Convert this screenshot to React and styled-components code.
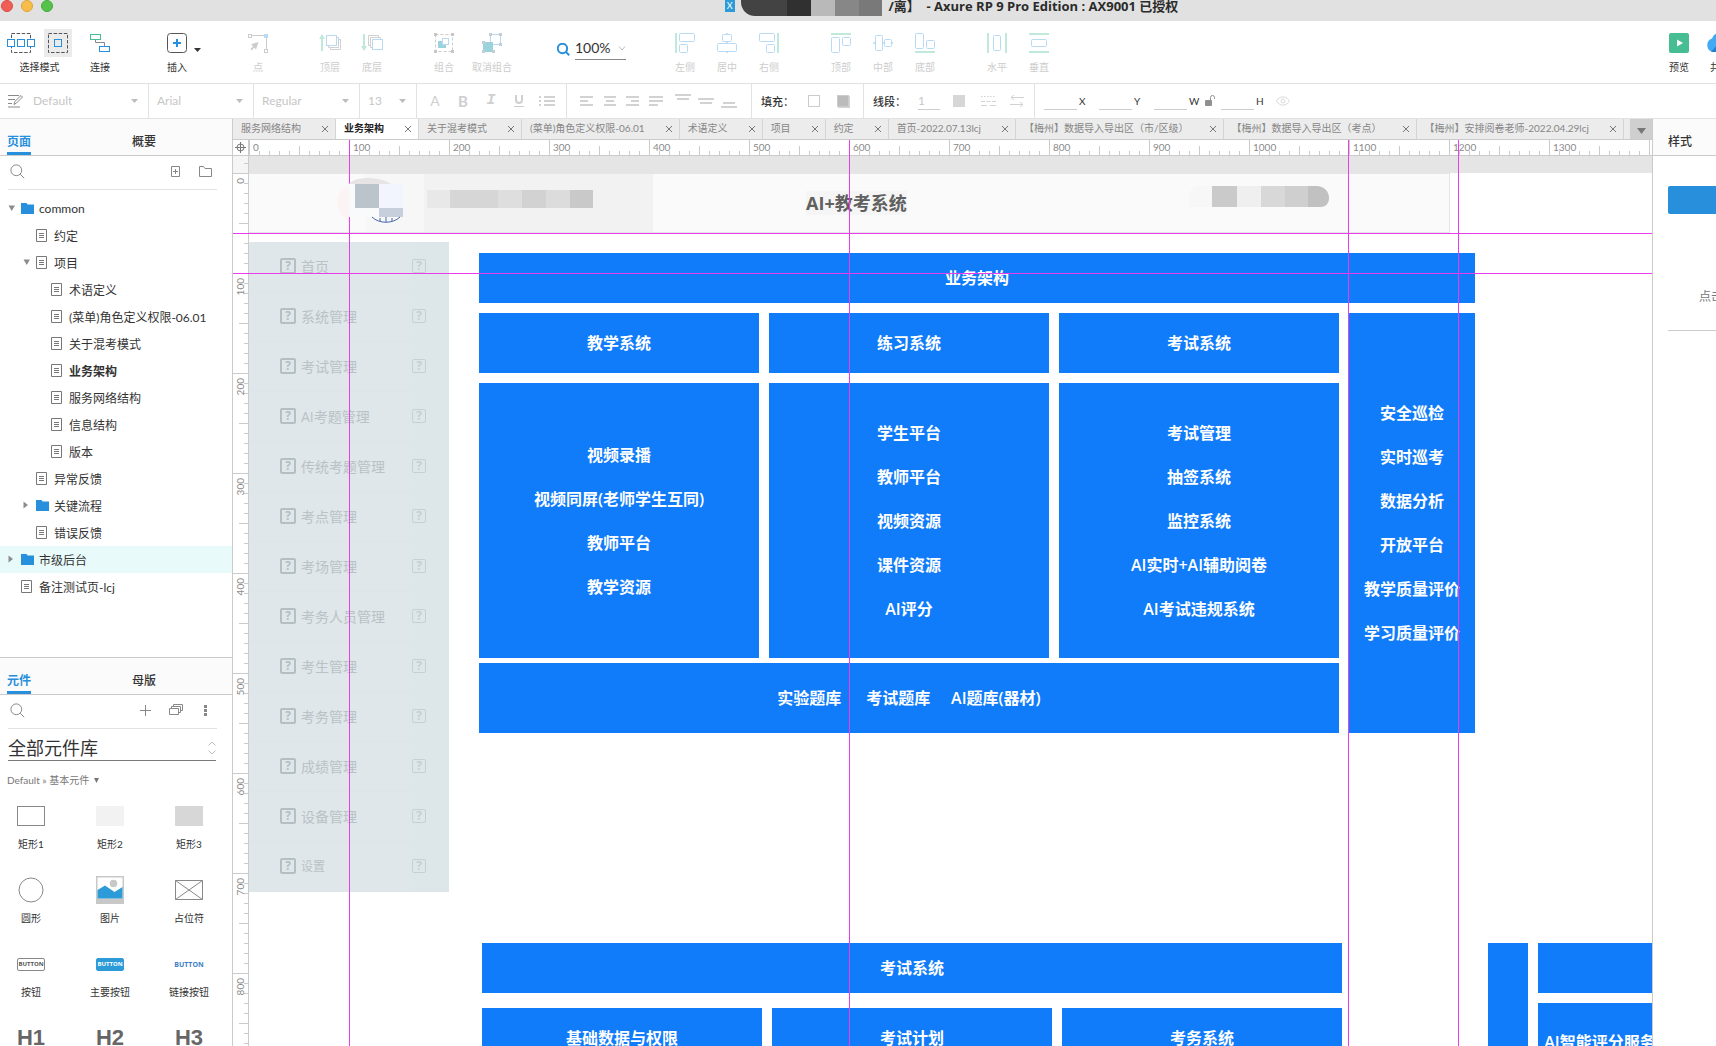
import React, { useState } from "react";
import styled, { createGlobalStyle, css } from "styled-components";

const uiFont = `Lato, "Noto Sans CJK SC", sans-serif`;
const canvasFont = `"Open Sans", "Noto Sans CJK SC", sans-serif`;

const blue = "#288fdc";
const line = "#cbcbcb";
const softLine = "#e2e2e2";
const guide = "#ea3bec";
const paleBlue = "#b9daf5";
const paleGreen = "#bfe9da";

const GlobalStyle = createGlobalStyle`
  * {
    box-sizing: border-box;
  }

  body {
    margin: 0;
    background: #fff;
    color: #333;
    font-family: ${uiFont};
    font-size: 12px;
  }

  button, input, select {
    margin: 0;
    padding: 0;
    border: none;
    border-radius: 0;
    background: none;
    color: inherit;
    font: inherit;
    outline: none;
  }

  select {
    appearance: none;
  }

  svg {
    display: block;
    flex: none;
  }
`;

const Window = styled.div`
  display: flex;
  flex-direction: column;
  height: 100vh;
  overflow: hidden;
`;

/* ---------- title bar ---------- */

const TitleBar = styled.header`
  flex: none;
  display: grid;
  grid-template-columns: 1fr auto 1fr;
  height: 21px;
  background: #e1e1e1;
`;

const Lights = styled.div`
  display: flex;
  gap: 8px;
  padding-left: 1px;
`;

const Light = styled.button`
  width: 12px;
  height: 12px;
  border-radius: 50%;
  background: ${(p) => p.$color};
  border: 1px solid ${(p) => p.$edge};
`;

const Title = styled.div`
  display: flex;
  align-items: flex-start;
  height: 17px;
  padding-left: 187px;
  font: bold 13px/12px "Open Sans", "Noto Sans CJK SC", sans-serif;
  color: #2b2b2b;
  white-space: pre;
`;

const FileBadge = styled.span`
  width: 10px;
  height: 12px;
  margin-right: 6px;
  background: #2d9bd8;
  color: #fff;
  font: 9px/11px ${uiFont};
  text-align: center;
`;

const Mosaic = styled.span`
  display: flex;
  height: ${(p) => p.$height}px;
  overflow: hidden;
  border-radius: ${(p) => p.$radius || "0"};
`;

const Tile = styled.span`
  width: ${(p) => p.$width}px;
  background: ${(p) => p.$color};
`;

/* ---------- main toolbar ---------- */

const Toolbar = styled.div`
  flex: none;
  display: flex;
  height: 63px;
  border-bottom: 1px solid ${softLine};
`;

const ToolGroups = styled.div`
  flex: 1;
  min-width: 0;
  display: flex;
  gap: 30px;
  padding: 8px 0 0 7px;
  overflow: hidden;
`;

const ToolGroup = styled.div`
  flex: none;
  display: flex;
  gap: ${(p) => p.$gap || 0}px;
  padding: ${(p) => p.$padding || "0"};
`;

const Tool = styled.button`
  flex: none;
  display: flex;
  flex-direction: column;
  align-items: center;
  gap: 4px;
  width: ${(p) => p.$width || 42}px;
  height: 44px;
  color: ${(p) => (p.disabled ? "#cdcdcd" : "#333")};
  font-size: 10px;
  line-height: 12px;
  white-space: nowrap;
`;

const ToolIcon = styled.span`
  display: flex;
  align-items: center;
  justify-content: center;
  height: 28px;
`;

const ModeIcons = styled(ToolIcon)`
  gap: 8px;
`;

const ModeOn = styled.span`
  display: flex;
  align-items: center;
  justify-content: center;
  width: 28px;
  height: 28px;
  background: #ebebeb;
`;

const CaretButton = styled.button`
  display: flex;
  align-items: center;
  width: 8px;
  height: 42px;
`;

const ZoomGroup = styled.div`
  display: flex;
  align-items: center;
  gap: 5px;
  height: 40px;
  padding: 0 8px;
`;

const ZoomBox = styled.div`
  display: flex;
  align-items: center;
  width: 51px;
  height: 21px;
  border-bottom: 1px solid #888;

  select {
    flex: 1;
    min-width: 0;
    font-size: 14px;
    line-height: 18px;
    padding-bottom: 2px;
  }
`;

const ShareTools = styled.div`
  flex: none;
  display: flex;
  gap: 7px;
  width: 64px;
  padding: 8px 0 0 10px;
  overflow: hidden;
`;

/* ---------- format bar ---------- */

const FormatBar = styled.div`
  flex: none;
  display: flex;
  height: 35px;
  border-bottom: 1px solid ${softLine};
  overflow: hidden;
`;

const Segment = styled.div`
  flex: none;
  display: flex;
  align-items: center;
  gap: ${(p) => p.$gap || 0}px;
  width: ${(p) => p.$width}px;
  padding: 0 10px 0 8px;
  border-right: 1px solid ${softLine};
  color: #c6c6c6;

  select {
    flex: 1;
    min-width: 0;
    line-height: 20px;
  }
`;

const ButtonSegment = styled(Segment)`
  padding: 0 0 0 ${(p) => p.$left}px;
`;

const Fields = styled.div`
  display: flex;
  align-items: center;
  gap: 10px;
  padding-left: 9px;
`;

const FormatButton = styled.button`
  display: flex;
  align-items: center;
  justify-content: center;
  width: ${(p) => p.$width}px;
  height: 24px;
  color: #cfcfcf;
  font: ${(p) => p.$font || "inherit"};
`;

const Spacer = styled.span`
  width: 4px;
`;

const FormatLabel = styled.span`
  width: 36px;
  color: #333;
  font-size: 11px;
  font-weight: 500;
  white-space: nowrap;
`;

const Swatch = styled.button`
  flex: none;
  width: 12px;
  height: 12px;
  border: 1px solid ${(p) => p.$edge};
  background: ${(p) => p.$fill};
`;

const ShadowSwatch = styled(Swatch)`
  box-shadow: 1px 1px 0 #d4d4d4;
`;

const LineInput = styled.input`
  width: ${(p) => p.$width}px;
  height: 18px;
  border-bottom: 1px solid #cdcdcd;
  color: #c6c6c6;
`;

const Field = styled.label`
  display: flex;
  align-items: center;
  gap: 2px;
  width: 45px;
  font-size: 10px;
`;

const LockButton = styled.button`
  margin: 0 -4px;
`;

/* ---------- side panels ---------- */

const Main = styled.div`
  flex: 1;
  min-height: 0;
  display: flex;
`;

const LeftPanel = styled.aside`
  flex: none;
  display: flex;
  flex-direction: column;
  width: 233px;
  border-right: 1px solid ${line};
`;

const PagesPane = styled.section`
  flex: 539 1 0;
  min-height: 0;
  overflow: hidden;
`;

const WidgetsPane = styled.section`
  flex: 388 1 0;
  min-height: 0;
  overflow: hidden;
  border-top: 1px solid ${line};
`;

const PaneTabs = styled.div`
  display: grid;
  grid-template-columns: 125px auto;
  justify-items: start;
  align-items: end;
  height: 37px;
  padding-left: ${(p) => p.$left || 7}px;
  background: #fbfbfb;
  border-bottom: 1px solid ${line};
`;

const PaneTab = styled.button`
  font-size: 12px;
  font-weight: ${(p) => (p.$active ? "bold" : 500)};
  line-height: 20px;
  color: ${(p) => (p.$active ? blue : "#333")};
  border-bottom: 3px solid ${(p) => (p.$active ? blue : "transparent")};
`;

const PaneActions = styled.div`
  display: flex;
  align-items: center;
  justify-content: space-between;
  height: 34px;
  margin: 0 15px 0 8px;
  padding: 0 0 3px 2px;
  border-bottom: 1px solid ${softLine};
`;

const ActionGroup = styled.div`
  display: flex;
  margin-right: -4px;
`;

const ActionButton = styled.button`
  display: flex;
  align-items: center;
  justify-content: center;
  width: ${(p) => p.$width || 30}px;
  height: 24px;
`;

const Tree = styled.ul`
  margin: 0;
  padding: 5px 0 0;
  list-style: none;
`;

const TreeRow = styled.li`
  display: flex;
  align-items: center;
  height: 27px;
  padding: 0 0 1px ${(p) => 8 + p.$level * 15}px;
  background: ${(p) => (p.$marked ? "#e9fafa" : "none")};
  font-weight: ${(p) => (p.$current ? "bold" : "normal")};
  white-space: nowrap;
`;

const ArrowSlot = styled.span`
  width: 13px;
`;

const IconSlot = styled.span`
  width: 18px;
`;

const LibraryBox = styled.div`
  display: flex;
  align-items: center;
  height: 32px;
  margin: 0 16px 0 8px;
  padding-top: 7px;
  border-bottom: 1px solid #7a7a7a;

  select {
    flex: 1;
    min-width: 0;
    font-size: 18px;
    line-height: 24px;
  }
`;

const Crumb = styled.button`
  display: flex;
  align-items: center;
  gap: 5px;
  margin: 12px 0 0 7px;
  font-size: 10px;
  line-height: 14px;
  color: #777;
`;

const WidgetGrid = styled.div`
  display: grid;
  grid-template-columns: repeat(3, 44px);
  grid-auto-rows: 74px;
  column-gap: 35px;
  margin: 15px 0 0 9px;
`;

const Widget = styled.div`
  display: flex;
  flex-direction: column;
  align-items: center;
  gap: 7px;
  font-size: 10px;
  line-height: 14px;
  white-space: nowrap;
`;

const WidgetArt = styled.div`
  display: flex;
  align-items: center;
  justify-content: center;
  height: 28px;
`;

const Box = styled.span`
  width: 28px;
  height: 20px;
  border: 1px solid ${(p) => p.$edge};
  background: ${(p) => p.$fill};
`;

const MiniButton = styled.span`
  width: 28px;
  height: 13px;
  border: 1px solid ${(p) => p.$edge};
  border-radius: 2px;
  background: ${(p) => p.$fill};
  color: ${(p) => p.$color};
  font: bold 6px/11px "Open Sans", sans-serif;
  text-align: center;
`;

const MiniLink = styled.span`
  color: #3d7fc4;
  font: bold 7px/11px "Open Sans", sans-serif;
`;

const HeadingArt = styled.span`
  color: #666;
  font: bold 22px/24px "Liberation Sans", Arial, sans-serif;
`;

const RightPanel = styled.aside`
  flex: none;
  width: 64px;
  border-left: 1px solid ${line};
  overflow: hidden;
`;

const StyleBody = styled.div`
  width: 230px;
  padding: 30px 15px 0;
`;

const StyleButton = styled.button`
  display: block;
  width: 200px;
  height: 28px;
  border-radius: 2px;
  background: ${blue};
`;

const StyleHint = styled.p`
  margin: 0;
  padding: 73px 0 23px 31px;
  border-bottom: 1px solid ${line};
  color: #777;
  line-height: 20px;
  white-space: nowrap;
`;

/* ---------- workspace ---------- */

const Workspace = styled.main`
  flex: 1;
  min-width: 0;
  display: flex;
  flex-direction: column;
`;

const TabStrip = styled.div`
  flex: none;
  display: flex;
  height: 21px;
  background: #ececec;
  border-bottom: 1px solid ${line};
`;

const Tabs = styled.div`
  flex: 1;
  min-width: 0;
  display: flex;
  overflow: hidden;
`;

const Tab = styled.div`
  flex: none;
  display: flex;
  align-items: center;
  gap: 20px;
  padding: 0 6px 0 8px;
  border-right: 1px solid #d5d5d5;
  background: ${(p) => (p.$active ? "#fff" : "#ececec")};
  font-size: 10px;
`;

const TabName = styled.button`
  line-height: 18px;
  padding-bottom: 2px;
  color: ${(p) => (p.$active ? "#222" : "#868686")};
  font-weight: ${(p) => (p.$active ? "bold" : "normal")};
  white-space: nowrap;
`;

const TabMore = styled.button`
  flex: none;
  display: flex;
  align-items: center;
  justify-content: center;
  width: 22px;
  padding-top: 4px;
  background: #cfcfcf;
`;

const Stage = styled.div`
  flex: 1;
  min-height: 0;
  display: flex;
  flex-direction: column;
  position: relative;
  overflow: hidden;
  isolation: isolate;
`;

const RulerRow = styled.div`
  flex: none;
  display: flex;
  height: 16px;
  border-bottom: 1px solid ${line};
`;

const Corner = styled.div`
  flex: none;
  display: flex;
  align-items: center;
  justify-content: center;
  width: 16px;
  border-right: 1px solid ${line};
`;

const HRuler = styled.div`
  flex: 1;
  min-width: 0;
  display: flex;
  overflow: hidden;
`;

const rulerText = css`
  color: #8a8a8a;
  font-size: 10px;
`;

const HCell = styled.div`
  flex: none;
  width: 100px;
  padding-left: 3px;
  border-left: 1px solid ${line};
  line-height: 15px;
  background:
    linear-gradient(${line}, ${line}) 49px 100% / 1px 9px no-repeat,
    repeating-linear-gradient(90deg, transparent 0 9px, ${line} 9px 10px) 0 100% / 100% 4px no-repeat;
  ${rulerText}
`;

const StageBody = styled.div`
  flex: 1;
  min-height: 0;
  display: flex;
`;

const VRuler = styled.div`
  flex: none;
  width: 16px;
  border-right: 1px solid ${line};
  overflow: hidden;
`;

const VLead = styled.div`
  height: 17px;
  background:
    linear-gradient(${line}, ${line}) 100% 7px / 4px 1px no-repeat,
    #f5f5f5;
`;

const VCell = styled.div`
  height: 100px;
  padding-top: 4px;
  border-top: 1px solid ${line};
  background:
    linear-gradient(${line}, ${line}) 100% 49px / 9px 1px no-repeat,
    repeating-linear-gradient(180deg, transparent 0 9px, ${line} 9px 10px) 100% 0 / 4px 100% no-repeat;
  ${rulerText}

  span {
    display: block;
    writing-mode: vertical-rl;
    transform: rotate(180deg);
    line-height: 15px;
  }
`;

const Canvas = styled.div`
  flex: 1;
  min-width: 0;
  padding-top: 17px;
  background: #e5e5e5;
  overflow: hidden;
`;

const Page = styled.div`
  position: relative;
  height: 100%;
  background: #fff;
  font-family: ${canvasFont};
`;

const Guide = styled.div`
  position: absolute;
  z-index: 1;
  background: ${guide};
  ${(p) =>
    p.$vertical
      ? `left: ${p.$at}px; top: 0; bottom: 0; width: 1px;`
      : `top: ${p.$at}px; left: 0; right: 0; height: 1px;`}
`;

const Placed = styled.div`
  position: absolute;
  left: ${(p) => p.$x}px;
  top: ${(p) => p.$y}px;
  width: ${(p) => (p.$w ? `${p.$w}px` : "auto")};
  height: ${(p) => (p.$h ? `${p.$h}px` : "auto")};
`;

const Node = styled(Placed)`
  display: flex;
  flex-direction: column;
  align-items: center;
  justify-content: center;
  background: #107cfa;
  color: #fff;
  font-size: 16px;
  font-weight: 600;
  line-height: 44px;
  white-space: pre;
`;

const Banner = styled(Placed)`
  background: #fafafa;
  border: 1px solid #e6e6e6;
  border-left: none;
`;

const BannerShade = styled(Placed)`
  background: linear-gradient(90deg, #f7f7f7 58px, #f2f2f2 58px);
`;

const BannerTitle = styled(Placed)`
  background: #f5f5f5;
  color: #606060;
  font-size: 18px;
  font-weight: bold;
  line-height: 24px;
  white-space: nowrap;
`;

const Emblem = styled(Placed)`
  z-index: 2;
`;

const Menu = styled(Placed)`
  background: linear-gradient(90deg, #dfe7ea 160px, #dde7e9 160px);
`;

const MenuRow = styled.div`
  display: flex;
  align-items: center;
  height: 50px;
  padding: 0 23px 1px 31px;
  border-bottom: 1px solid #dce5e8;
  color: #b9c2c5;
  font-size: ${(p) => (p.$small ? 12 : 14)}px;

  span {
    flex: 1;
    padding-left: 5px;
  }
`;

const Unknown = styled.i`
  flex: none;
  width: ${(p) => p.$size}px;
  height: ${(p) => p.$size}px;
  border: ${(p) => (p.$faint ? 1 : 2)}px solid ${(p) => (p.$faint ? "#c5d0d2" : "#b5bec1")};
  border-radius: 2px;
  color: ${(p) => (p.$faint ? "#c5d0d2" : "#b5bec1")};
  font: bold 12px/12px "Open Sans", sans-serif;
  text-align: center;
`;

/* ---------- drawings ---------- */

const Svg = ({ w, h, children, ...rest }) => (
  <svg width={w} height={h} viewBox={`0 0 ${w} ${h}`} fill="none" aria-hidden="true" {...rest}>
    {children}
  </svg>
);

const Caret = ({ color = "#bdbdbd" }) => (
  <Svg w={7} h={4}><path d="M0 0h7L3.5 4z" fill={color} /></Svg>
);

const SearchIcon = ({ size = 15, color = "#888", width = 1 }) => (
  <Svg w={size} h={size} stroke={color} strokeWidth={width}>
    <circle cx={size * 0.42} cy={size * 0.42} r={size * 0.36} />
    <path d={`M${size * 0.68} ${size * 0.68}L${size - 0.8} ${size - 0.8}`} />
  </Svg>
);

const Arrow = ({ open }) => (
  <Svg w={8} h={8}>
    <path d={open ? "M0.5 1.5h6.5L3.75 7z" : "M0.5 0.5v7L5 4z"} fill="#8c8c8c" />
  </Svg>
);

const PageIcon = () => (
  <Svg w={11} h={13} stroke="#777">
    <path d="M.5.5h10v12H.5zM3 4.5h5M3 6.5h5M3 8.5h5" />
  </Svg>
);

const FolderIcon = () => (
  <Svg w={13} h={11}><path d="M0 0h5.5l1 1.5H13V11H0z" fill={blue} /></Svg>
);

const MultiSelectIcon = () => (
  <Svg w={29} h={20}>
    <rect x="4.5" y=".5" width="19" height="19" stroke="#555" strokeDasharray="3.5 1.6" />
    <g stroke={blue} fill="#fff">
      <rect x=".5" y="6.5" width="7" height="7" />
      <rect x="10.5" y="6.5" width="7" height="7" />
      <rect x="20.5" y="6.5" width="7" height="7" />
    </g>
  </Svg>
);

const SingleSelectIcon = () => (
  <Svg w={20} h={20}>
    <rect x=".5" y=".5" width="19" height="19" stroke="#555" strokeDasharray="3.5 1.6" />
    <rect x="6.5" y="6.5" width="7" height="7" stroke={blue} />
  </Svg>
);

const ConnectIcon = () => (
  <Svg w={20} h={20}>
    <path d="M5.5 7v2.5h9V13" stroke="#888" />
    <rect x=".5" y="1.5" width="10" height="5" stroke="#47bd94" />
    <rect x="9.5" y="13.5" width="10" height="5" stroke={blue} />
  </Svg>
);

const InsertIcon = () => (
  <Svg w={20} h={20}>
    <rect x=".5" y=".5" width="19" height="19" rx="3" stroke="#555" />
    <path d="M10 6v8M6 10h8" stroke={blue} strokeWidth="2" />
  </Svg>
);

const PointIcon = () => (
  <Svg w={20} h={20} stroke="#ccc">
    <path d="M4 2.5h12M18.5 5v12" />
    <rect x=".5" y="1.5" width="3" height="3" />
    <rect x="16.5" y="16.5" width="3" height="3" />
    <rect x="16" y="1" width="4" height="4" fill={paleBlue} stroke="none" />
    <path d="M10.500 9l-2.500 7.500-2-2L4 17.500 2.500 16l2.600-2.800-2-2z" fill="#ccc" stroke="none" />
  </Svg>
);

const FrontIcon = () => (
  <Svg w={22} h={20}>
    <path d="M3 18V4" stroke={paleGreen} strokeWidth="2" />
    <path d="M0 6l3-5 3 5z" fill={paleGreen} />
    <path d="M11.5 14.5v2h10v-10h-2M9.5 12.5v2h10v-10h-2" stroke="#d0d0d0" />
    <rect x="7.5" y="2.5" width="10" height="10" stroke={paleBlue} fill="#fff" />
  </Svg>
);

const BackIcon = () => (
  <Svg w={22} h={20}>
    <path d="M3 1v14" stroke={paleGreen} strokeWidth="2" />
    <path d="M0 13l3 5 3-5z" fill={paleGreen} />
    <path d="M9 12.5H7.5v-10h10V4M11 14.5H9.5v-10h10V6" stroke="#d0d0d0" />
    <rect x="11.5" y="6.5" width="10" height="10" stroke={paleBlue} fill="#fff" />
  </Svg>
);

const GroupIcon = () => (
  <Svg w={20} h={20}>
    <rect x="1.5" y="1.5" width="17" height="17" stroke="#ccc" strokeDasharray="3 2" />
    <path d="M0 0h3v3H0zM17 0h3v3h-3zM0 17h3v3H0zM17 17h3v3h-3z" fill="#c6c6c6" />
    <path d="M4 8h8v7H4z" fill="#9bd3dc" />
    <rect x="8.5" y="5.5" width="6" height="6" stroke={paleBlue} fill="#fff" />
  </Svg>
);

const UngroupIcon = () => (
  <Svg w={20} h={20}>
    <rect x="8.5" y="1.5" width="10" height="10" stroke={paleBlue} />
    <path d="M1 9h10v10H1z" fill="#9bd3dc" />
    <path d="M7 0h3v3H7zM17 0h3v3h-3zM17 10h3v3h-3zM0 8h3v3H0zM0 17h3v3H0zM10 17h3v3h-3z" fill="#c4cdd2" />
  </Svg>
);

// bar: the green edge, boxes: [x, y, width, height] of the two aligned shapes
const AlignIcon = ({ bar, boxes }) => (
  <Svg w={20} h={20}>
    <path d={bar} stroke={paleGreen} strokeWidth="2" />
    {boxes.map(([x, y, w, h]) => (
      <rect key={`${x}-${y}`} x={x} y={y} width={w} height={h} rx="1" stroke={paleBlue} fill="#fff" />
    ))}
  </Svg>
);

const PreviewIcon = () => (
  <Svg w={20} h={20}>
    <rect width="20" height="20" rx="2" fill="#47bd94" />
    <path d="M8 6.5l6 3.5-6 3.5z" fill="#fff" />
  </Svg>
);

const CloudIcon = () => (
  <Svg w={28} h={20}>
    <path d="M7 19a7 7 0 0 1-1-13.5A8 8 0 0 1 21 5a7 7 0 0 1 0 14z" fill="#42aaf5" />
    <path d="M5 19l7-8 12 8z" fill="#1e7fd0" />
  </Svg>
);

const StyleIcon = () => (
  <Svg w={15} h={14} stroke="#8a8a8a">
    <path d="M0 1.5h11M0 5.5h7M0 9.5h4M0 13h12M6 10.5l.8-3L13 1.5l1.5 1.5-6 6z" />
  </Svg>
);

const Lines = ({ w = 14, h = 11, rows }) => (
  <Svg w={w} h={h}>
    {rows.map(([x, y, width]) => (
      <rect key={`${x}-${y}`} x={x} y={y} width={width} height="2" fill="#d2d2d2" />
    ))}
  </Svg>
);

const ChevronDown = () => (
  <Svg w={8} h={5} stroke="#bbb"><path d="M1 .5l3 3.5 3-3.5" /></Svg>
);

const UpDown = () => (
  <Svg w={8} h={14} stroke="#bbb"><path d="M.5 4.5L4 1l3.5 3.5M.5 9.5L4 13l3.5-3.5" /></Svg>
);

const CloseIcon = () => (
  <Svg w={8} h={8} stroke="#777"><path d="M1 1l6 6M7 1L1 7" /></Svg>
);

/* ---------- data ---------- */

const alignTools = [
  [
    ["左侧", "M1 0v20", [[4.5, .5, 15, 8], [4.5, 11.5, 8, 8]]],
    ["居中", "M10 0v20", [[5.5, 1.5, 9, 7], [.5, 10.5, 19, 8]]],
    ["右侧", "M19 0v20", [[.5, .5, 15, 8], [7.5, 11.5, 8, 8]]],
  ],
  [
    ["顶部", "M0 1h20", [[.5, 4.5, 8, 15], [11.5, 4.5, 8, 8]]],
    ["中部", "M0 10h20", [[2.5, 2.5, 7, 15], [11.5, 6.5, 7, 7]]],
    ["底部", "M0 19h20", [[.5, .5, 8, 15], [11.5, 7.5, 8, 8]]],
  ],
  [
    ["水平", "M1 0v20M19 0v20", [[6.5, 2.5, 7, 15]]],
    ["垂直", "M0 1h20M0 19h20", [[2.5, 6.5, 15, 7]]],
  ],
];

const textAligns = [
  [[0, 0, 13], [0, 4, 8], [0, 8, 13]],
  [[1, 0, 12], [3, 4, 8], [1, 8, 12]],
  [[0, 0, 13], [5, 4, 8], [0, 8, 13]],
  [[0, 0, 14], [0, 4, 14], [0, 8, 9]],
];

const vertAligns = [
  [[0, 0, 16], [2, 4, 12]],
  [[0, 4, 16], [2, 8, 12]],
  [[2, 8, 12], [0, 12, 16]],
];

const tree = [
  { name: "common", level: 0, folder: true, arrow: "open" },
  { name: "约定", level: 1 },
  { name: "项目", level: 1, arrow: "open" },
  { name: "术语定义", level: 2 },
  { name: "(菜单)角色定义权限-06.01", level: 2 },
  { name: "关于混考模式", level: 2 },
  { name: "业务架构", level: 2 },
  { name: "服务网络结构", level: 2 },
  { name: "信息结构", level: 2 },
  { name: "版本", level: 2 },
  { name: "异常反馈", level: 1 },
  { name: "关键流程", level: 1, folder: true, arrow: "closed" },
  { name: "错误反馈", level: 1 },
  { name: "市级后台", level: 0, folder: true, arrow: "closed", marked: true },
  { name: "备注测试页-lcj", level: 0 },
];

const tabs = [
  "服务网络结构",
  "业务架构",
  "关于混考模式",
  "(菜单)角色定义权限-06.01",
  "术语定义",
  "项目",
  "约定",
  "首页-2022.07.13lcj",
  "【梅州】数据导入导出区（市/区级）",
  "【梅州】数据导入导出区（考点）",
  "【梅州】安排阅卷老师-2022.04.29lcj",
];

const menu = [
  "首页", "系统管理", "考试管理", "AI考题管理", "传统考题管理", "考点管理", "考场管理",
  "考务人员管理", "考生管理", "考务管理", "成绩管理", "设备管理", "设置",
];

const nodes = [
  [230, 80, 996, 50, ["业务架构"]],
  [230, 140, 280, 60, ["教学系统"]],
  [520, 140, 280, 60, ["练习系统"]],
  [810, 140, 280, 60, ["考试系统"]],
  [1100, 140, 126, 420, ["安全巡检", "实时巡考", "数据分析", "开放平台", "教学质量评价", "学习质量评价"]],
  [230, 210, 280, 275, ["视频录播", "视频同屏(老师学生互同)", "教师平台", "教学资源"]],
  [520, 210, 280, 275, ["学生平台", "教师平台", "视频资源", "课件资源", "AI评分"]],
  [810, 210, 280, 275, ["考试管理", "抽签系统", "监控系统", "AI实时+AI辅助阅卷", "AI考试违规系统"]],
  [230, 490, 860, 70, ["实验题库      考试题库     AI题库(器材)"]],
  [233, 770, 860, 50, ["考试系统"]],
  [233, 835, 280, 60, ["基础数据与权限"]],
  [523, 835, 280, 60, ["考试计划"]],
  [813, 835, 280, 60, ["考务系统"]],
  [1239, 770, 40, 300, []],
  [1289, 770, 124, 50, []],
  [1289, 830, 124, 78, ["AI智能评分服务"]],
];

const titleTiles = [[46, "#434343"], [24, "#303030"], [24, "#b9b9b9"], [24, "#878787"], [23, "#797979"]];
const nameTiles = [[23, "#e8e8e8"], [48, "#d6d6d6"], [24, "#dedede"], [24, "#d2d2d2"], [24, "#dcdcdc"], [23, "#c9c9c9"]];
const userTiles = [[23, "#f7f7f7"], [25, "#cacaca"], [24, "#efefef"], [24, "#d8d8d8"], [23, "#cfcfcf"], [21, "#c1c1c1"]];

const Tiles = ({ tiles, height, radius }) => (
  <Mosaic $height={height} $radius={radius}>
    {tiles.map(([width, color], i) => (
      <Tile key={i} $width={width} $color={color} />
    ))}
  </Mosaic>
);

/* ---------- sections ---------- */

const MainToolbar = () => (
  <Toolbar>
    <ToolGroups>
      <ToolGroup $gap={7}>
        <Tool $width={65}>
          <ModeIcons>
            <MultiSelectIcon />
            <ModeOn><SingleSelectIcon /></ModeOn>
          </ModeIcons>
          选择模式
        </Tool>
        <Tool><ToolIcon><ConnectIcon /></ToolIcon>连接</Tool>
      </ToolGroup>
      <ToolGroup $padding="0 5px 0 9px">
        <Tool $width={34}><ToolIcon><InsertIcon /></ToolIcon>插入</Tool>
        <CaretButton aria-label="更多插入"><Caret color="#333" /></CaretButton>
      </ToolGroup>
      <ToolGroup>
        <Tool disabled><ToolIcon><PointIcon /></ToolIcon>点</Tool>
      </ToolGroup>
      <ToolGroup>
        <Tool disabled><ToolIcon><FrontIcon /></ToolIcon>顶层</Tool>
        <Tool disabled><ToolIcon><BackIcon /></ToolIcon>底层</Tool>
      </ToolGroup>
      <ToolGroup>
        <Tool disabled><ToolIcon><GroupIcon /></ToolIcon>组合</Tool>
        <Tool disabled $width={54}><ToolIcon><UngroupIcon /></ToolIcon>取消组合</Tool>
      </ToolGroup>
      <ZoomGroup>
        <SearchIcon size={13} color={blue} width={2} />
        <ZoomBox>
          <select aria-label="缩放" defaultValue="100%"><option>100%</option></select>
          <ChevronDown />
        </ZoomBox>
      </ZoomGroup>
      {alignTools.map((group, i) => (
        <ToolGroup key={i}>
          {group.map(([name, bar, boxes]) => (
            <Tool key={name} disabled>
              <ToolIcon><AlignIcon bar={bar} boxes={boxes} /></ToolIcon>
              {name}
            </Tool>
          ))}
        </ToolGroup>
      ))}
    </ToolGroups>
    <ShareTools>
      <Tool $width={34}><ToolIcon><PreviewIcon /></ToolIcon>预览</Tool>
      <Tool $width={34}><ToolIcon><CloudIcon /></ToolIcon>共享</Tool>
    </ShareTools>
  </Toolbar>
);

const FormatToolbar = () => (
  <FormatBar>
    <Segment $width={149} $gap={10}>
      <StyleIcon />
      <select aria-label="样式" defaultValue="Default"><option>Default</option></select>
      <Caret />
    </Segment>
    <Segment $width={105}>
      <select aria-label="字体" defaultValue="Arial"><option>Arial</option></select>
      <Caret />
    </Segment>
    <Segment $width={106}>
      <select aria-label="字重" defaultValue="Regular"><option>Regular</option></select>
      <Caret />
    </Segment>
    <Segment $width={57}>
      <select aria-label="字号" defaultValue="13"><option>13</option></select>
      <Caret />
    </Segment>
    <ButtonSegment $width={150} $left={4}>
      <FormatButton $width={28} $font={`14px/20px ${uiFont}`}>A</FormatButton>
      <FormatButton $width={28} $font={`bold 15px/20px ${uiFont}`}>B</FormatButton>
      <FormatButton $width={28} $font={`italic bold 15px/20px "Liberation Mono", monospace`}>I</FormatButton>
      <FormatButton $width={28} aria-label="下划线">
        <Svg w={10} h={12} stroke="#cfcfcf" strokeWidth="2">
          <path d="M2 0v5a3 3 0 0 0 6 0V0" />
          <path d="M0 11.5h10" strokeWidth="1" />
        </Svg>
      </FormatButton>
      <FormatButton $width={28} aria-label="项目符号">
        <Lines w={16} rows={[[0, 0, 2], [5, 0, 11], [0, 4, 2], [5, 4, 11], [0, 8, 2], [5, 8, 11]]} />
      </FormatButton>
    </ButtonSegment>
    <ButtonSegment $width={185} $left={8}>
      {textAligns.map((rows, i) => (
        <FormatButton key={i} $width={23} aria-label="文本对齐"><Lines rows={rows} /></FormatButton>
      ))}
      <Spacer />
      {vertAligns.map((rows, i) => (
        <FormatButton key={i} $width={23} aria-label="垂直对齐"><Lines w={16} h={14} rows={rows} /></FormatButton>
      ))}
    </ButtonSegment>
    <ButtonSegment $width={112} $left={9} $gap={5}>
      <FormatLabel>填充：</FormatLabel>
      <FormatButton $width={24} as="span"><Swatch $edge="#ccc" $fill="#fff" aria-label="填充颜色" /></FormatButton>
      <FormatButton $width={24} as="span"><ShadowSwatch $edge="#ccc" $fill="#bbb" aria-label="阴影" /></FormatButton>
    </ButtonSegment>
    <ButtonSegment $width={171} $left={9} $gap={9}>
      <FormatLabel>线段：</FormatLabel>
      <LineInput $width={22} aria-label="线宽" defaultValue="1" />
      <FormatButton $width={20} as="span"><Swatch $edge="#d6d6d6" $fill="#d6d6d6" aria-label="线段颜色" /></FormatButton>
      <FormatButton $width={20} aria-label="线型">
        <Svg w={15} h={12} stroke="#d2d2d2">
          <path d="M0 1.5h15" strokeDasharray="1.5 1.5" />
          <path d="M0 6.5h15" strokeDasharray="4 1.5" />
          <path d="M0 10.5h15" strokeDasharray="6 3" />
        </Svg>
      </FormatButton>
      <FormatButton $width={20} aria-label="箭头">
        <Svg w={14} h={12} stroke="#d2d2d2">
          <path d="M14 2.5H1M4 0L1 2.5 4 5M0 9.5h13M10 7l3 2.5-3 2.5" />
        </Svg>
      </FormatButton>
    </ButtonSegment>
    <Fields>
      <Field><LineInput $width={33} />X</Field>
      <Field><LineInput $width={33} />Y</Field>
      <Field><LineInput $width={33} />W</Field>
      <LockButton aria-label="锁定宽高比">
        <Svg w={10} h={12}>
          <rect y="5" width="7" height="6" rx="1" fill="#909090" />
          <path d="M5.5 5V2.5a2 2 0 0 1 4 0V4" stroke="#909090" />
        </Svg>
      </LockButton>
      <Field><LineInput $width={33} />H</Field>
      <button aria-label="可见性">
        <Svg w={14} h={10} stroke="#dcdcdc">
          <path d="M.5 5C3-.5 11-.5 13.5 5 11 10.5 3 10.5.5 5z" />
          <circle cx="7" cy="5" r="2" />
        </Svg>
      </button>
    </Fields>
  </FormatBar>
);

const PagesPanel = ({ current, onOpen }) => (
  <PagesPane>
    <PaneTabs>
      <PaneTab $active>页面</PaneTab>
      <PaneTab>概要</PaneTab>
    </PaneTabs>
    <PaneActions>
      <ActionButton $width={15} aria-label="搜索页面"><SearchIcon /></ActionButton>
      <ActionGroup>
        <ActionButton aria-label="添加页面">
          <Svg w={10} h={11} stroke="#888"><path d="M.5.5h8v10h-8zM4.5 3v5M2 5.5h5" /></Svg>
        </ActionButton>
        <ActionButton aria-label="添加文件夹">
          <Svg w={14} h={11} stroke="#888"><path d="M.5.5h4l1.5 2h6.500v8H.5z" /></Svg>
        </ActionButton>
      </ActionGroup>
    </PaneActions>
    <Tree>
      {tree.map(({ name, level, folder, arrow, marked }) => (
        <TreeRow key={name} $level={level} $marked={marked} $current={name === current} onClick={() => onOpen(name)}>
          <ArrowSlot>{arrow && <Arrow open={arrow === "open"} />}</ArrowSlot>
          <IconSlot>{folder ? <FolderIcon /> : <PageIcon />}</IconSlot>
          {name}
        </TreeRow>
      ))}
    </Tree>
  </PagesPane>
);

const WidgetsPanel = () => (
  <WidgetsPane>
    <PaneTabs>
      <PaneTab $active>元件</PaneTab>
      <PaneTab>母版</PaneTab>
    </PaneTabs>
    <PaneActions>
      <ActionButton $width={15} aria-label="搜索元件"><SearchIcon /></ActionButton>
      <ActionGroup>
        <ActionButton aria-label="添加元件库">
          <Svg w={12} h={11} stroke="#888"><path d="M5.5 0v11M0 5.5h11" /></Svg>
        </ActionButton>
        <ActionButton aria-label="元件库">
          <Svg w={14} h={12} stroke="#888">
            <path d="M.5 4.5h9v6h-9zM2.5 4.5v-2h9v6h-2M4.5 2.5v-2h9v6h-2" />
          </Svg>
        </ActionButton>
        <ActionButton aria-label="更多">
          <Svg w={4} h={11}><path d="M0 0h3v3H0zM0 4h3v3H0zM0 8h3v3H0z" fill="#888" /></Svg>
        </ActionButton>
      </ActionGroup>
    </PaneActions>
    <LibraryBox>
      <select aria-label="元件库" defaultValue="全部元件库"><option>全部元件库</option></select>
      <UpDown />
    </LibraryBox>
    <Crumb>
      Default » 基本元件
      <Svg w={5} h={5}><path d="M0 0h5L2.5 5z" fill="#777" /></Svg>
    </Crumb>
    <WidgetGrid>
      <Widget><WidgetArt><Box $edge="#888" $fill="#fff" /></WidgetArt>矩形1</Widget>
      <Widget><WidgetArt><Box $edge="#f2f2f2" $fill="#f2f2f2" /></WidgetArt>矩形2</Widget>
      <Widget><WidgetArt><Box $edge="#d7d7d7" $fill="#d7d7d7" /></WidgetArt>矩形3</Widget>
      <Widget>
        <WidgetArt><Svg w={26} h={26} stroke="#888"><circle cx="13" cy="13" r="12" /></Svg></WidgetArt>
        圆形
      </Widget>
      <Widget>
        <WidgetArt>
          <Svg w={28} h={28}>
            <path d="M0 0h28v28H0z" fill="#c8c8c8" />
            <path d="M1.5 1.5h25v21h-25z" fill="#fff" />
            <circle cx="17.5" cy="7.5" r="3.8" fill="#c8c8c8" />
            <path d="M1.5 14L9 9.5l9.5 6.5 8-5V22.5h-25z" fill="#2d9bd8" />
          </Svg>
        </WidgetArt>
        图片
      </Widget>
      <Widget>
        <WidgetArt>
          <Svg w={28} h={20} stroke="#888"><path d="M.5.5h27v19H.5zM.5.5l27 19M27.5.5l-27 19" /></Svg>
        </WidgetArt>
        占位符
      </Widget>
      <Widget><WidgetArt><MiniButton $edge="#888" $fill="#fff" $color="#555">BUTTON</MiniButton></WidgetArt>按钮</Widget>
      <Widget><WidgetArt><MiniButton $edge="#2d9bd8" $fill="#2d9bd8" $color="#fff">BUTTON</MiniButton></WidgetArt>主要按钮</Widget>
      <Widget><WidgetArt><MiniLink>BUTTON</MiniLink></WidgetArt>链接按钮</Widget>
      <Widget><WidgetArt><HeadingArt>H1</HeadingArt></WidgetArt></Widget>
      <Widget><WidgetArt><HeadingArt>H2</HeadingArt></WidgetArt></Widget>
      <Widget><WidgetArt><HeadingArt>H3</HeadingArt></WidgetArt></Widget>
    </WidgetGrid>
  </WidgetsPane>
);

const Artboard = () => (
  <Page>
    <Banner $x={0} $y={0} $w={1201} $h={60} />
    <BannerShade $x={117} $y={1} $w={287} $h={58} />
    <Emblem $x={88} $y={4}>
      <Svg w={68} h={48}>
        <path d="M0 24c0-6 4-12 12-14v34C4 38 0 32 0 24z" fill="#fcf4f4" />
        <path d="M12 7C18-1 42-1 54 7z" fill="#e7e4e5" />
        <path d="M12 7h54v33H12z" fill="#f8fafb" />
        <path d="M18 7h24v24H18z" fill="#bbc3cb" />
        <path d="M42 7h24v24H42z" fill="#f2f5fe" />
        <path d="M42 31h24v9H42z" fill="#c7cfdc" />
        <path d="M35 40c7 7 21 7 28 0M43 41v3M49 40v5M55 41v3" stroke="#4866ae" />
      </Svg>
    </Emblem>
    <Placed $x={178} $y={17}><Tiles tiles={nameTiles} height={18} /></Placed>
    <BannerTitle $x={557} $y={18}>AI+教考系统</BannerTitle>
    <Placed $x={940} $y={13}><Tiles tiles={userTiles} height={21} radius="10px 12px 8px 0" /></Placed>

    <Menu $x={0} $y={69} $w={200}>
      {menu.map((name) => (
        <MenuRow key={name} $small={name === "设置"}>
          <Unknown $size={16}>?</Unknown>
          <span>{name}</span>
          <Unknown $size={14} $faint>?</Unknown>
        </MenuRow>
      ))}
    </Menu>

    {nodes.map(([x, y, w, h, lines]) => (
      <Node key={`${x}-${y}`} $x={x} $y={y} $w={w} $h={h}>
        {lines.map((text) => <div key={text}>{text}</div>)}
      </Node>
    ))}
  </Page>
);

const range = (n) => Array.from({ length: n }, (_, i) => i * 100);

const App = () => {
  const [current, setCurrent] = useState("业务架构");

  return (
    <Window>
      <GlobalStyle />
      <TitleBar>
        <Lights>
          <Light $color="#f05f56" $edge="#dc4a42" aria-label="关闭" />
          <Light $color="#f8bd48" $edge="#e0a336" aria-label="最小化" />
          <Light $color="#55c24a" $edge="#40ab37" aria-label="缩放窗口" />
        </Lights>
        <Title>
          <FileBadge>X</FileBadge>
          <Tiles tiles={titleTiles} height={16} radius="0 0 0 14px" />
          {"  /离】  - Axure RP 9 Pro Edition : AX9001 已授权"}
        </Title>
      </TitleBar>
      <MainToolbar />
      <FormatToolbar />
      <Main>
        <LeftPanel>
          <PagesPanel current={current} onOpen={setCurrent} />
          <WidgetsPanel />
        </LeftPanel>
        <Workspace>
          <TabStrip>
            <Tabs>
              {tabs.map((name) => (
                <Tab key={name} $active={name === current}>
                  <TabName $active={name === current} onClick={() => setCurrent(name)}>{name}</TabName>
                  <button aria-label={`关闭 ${name}`}><CloseIcon /></button>
                </Tab>
              ))}
            </Tabs>
            <TabMore aria-label="所有标签">
              <Svg w={9} h={6}><path d="M0 0h9L4.5 6z" fill="#777" /></Svg>
            </TabMore>
          </TabStrip>
          <Stage>
            <RulerRow>
              <Corner>
                <Svg w={11} h={11} stroke="#777"><circle cx="5.5" cy="5.5" r="3.5" /><path d="M5.5 0v11M0 5.5h11" /></Svg>
              </Corner>
              <HRuler>
                {range(14).map((n) => <HCell key={n}>{n}</HCell>)}
                <HCell />
              </HRuler>
            </RulerRow>
            <StageBody>
              <VRuler>
                <VLead />
                {range(9).map((n) => <VCell key={n}><span>{n}</span></VCell>)}
              </VRuler>
              <Canvas><Artboard /></Canvas>
            </StageBody>
            {[116, 616, 1115, 1225].map((x) => <Guide key={x} $vertical $at={x} />)}
            {[93, 133].map((y) => <Guide key={y} $at={y} />)}
          </Stage>
        </Workspace>
        <RightPanel>
          <PaneTabs $left={15}><PaneTab>样式</PaneTab></PaneTabs>
          <StyleBody>
            <StyleButton aria-label="新建" />
            <StyleHint>点击</StyleHint>
          </StyleBody>
        </RightPanel>
      </Main>
    </Window>
  );
};

export default App;
